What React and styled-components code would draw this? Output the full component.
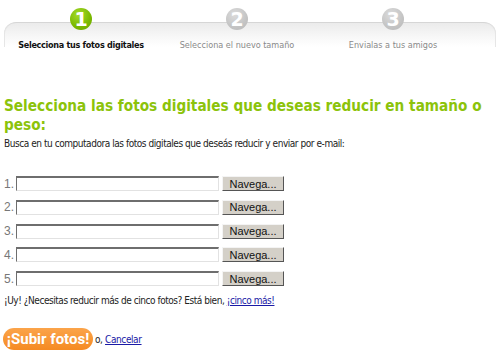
import React from 'react'
import styled, { createGlobalStyle, css } from 'styled-components'

const GlobalStyle = createGlobalStyle`
  body {
    margin: 0;
    background: #fff;
    font-family: "DejaVu Sans Condensed", "DejaVu Sans", Tahoma, sans-serif;
    color: #222;
  }
`

const steps = [
  { n: 1, label: 'Selecciona tus fotos digitales', active: true },
  { n: 2, label: 'Selecciona el nuevo tamaño' },
  { n: 3, label: 'Envialas a tus amigos' },
]

const Page = styled.div`
  width: 499px;
  padding: 0 3px;
  box-sizing: border-box;
`

const Header = styled.div`
  position: relative;
  display: flex;
  padding-top: 8px;
  height: 47px;

  &::before {
    content: '';
    position: absolute;
    top: 22px;
    left: 1px;
    right: 0;
    height: 24px;
    border-radius: 12px 12px 0 0;
    border-top: 1px solid #d6d6d6;
    background: linear-gradient(#ebebeb, #f8f8f8 60%, #fff);
    box-shadow: inset 1px 0 0 #e6e6e6, inset -1px 0 0 #e6e6e6;
  }
`

const Step = styled.div`
  position: relative;
  width: 156px;
  display: flex;
  flex-direction: column;
  align-items: center;
`

const Circle = styled.div`
  width: 22px;
  height: 22px;
  border-radius: 50%;
  display: flex;
  align-items: center;
  justify-content: center;
  color: #fff;
  font-family: "DejaVu Sans", sans-serif;
  font-weight: bold;
  font-size: 19px;
  line-height: 1;
  ${p => p.$active
    ? css`background: radial-gradient(circle at 40% 30%, #a6dc2a, #79b800 60%, #6aa300);`
    : css`background: radial-gradient(circle at 40% 30%, #dcdcdc, #c4c4c4 60%, #b8b8b8);`}
`

const StepLabel = styled.div`
  margin-top: 10px;
  font-size: 9px;
  white-space: nowrap;
  color: ${p => (p.$active ? '#111' : '#8a8a8a')};
  font-weight: ${p => (p.$active ? 'bold' : 'normal')};
  letter-spacing: ${p => (p.$active ? '-0.3px' : '0')};
`

const Heading = styled.h1`
  margin: 42px 0 0 1px;
  font-size: 15.2px;
  line-height: 19px;
  font-weight: bold;
  color: #8cc30a;
`

const Intro = styled.p`
  margin: 3px 0 0 1px;
  font-size: 10px;
  letter-spacing: -0.45px;
  color: #222;
`

const Files = styled.div`
  margin-top: 27px;
  display: flex;
  flex-direction: column;
  gap: 8.75px;
`

const FileRow = styled.div`
  display: flex;
  align-items: center;
  height: 15px;
`

const Num = styled.span`
  width: 12px;
  font-family: "Liberation Sans", Arial, sans-serif;
  font-size: 12px;
  color: #777;
  padding-left: 1px;
`

const FileInput = styled.div`
  width: 203px;
  height: 15px;
  box-sizing: border-box;
  border-top: 2px solid #6e6e6e;
  border-left: 1px solid #6e6e6e;
  border-right: 1px solid #e2e2e2;
  border-bottom: 1px solid #e2e2e2;
  background: #fff;
`

const Browse = styled.button`
  margin-left: 3px;
  width: 62px;
  height: 15px;
  padding: 0;
  box-sizing: border-box;
  font-family: "Liberation Sans", Arial, sans-serif;
  font-size: 11px;
  line-height: 12px;
  color: #111;
  background: #d4d0c8;
  border: 1px solid;
  border-color: #f4f4f4 #555 #555 #f4f4f4;
`

const More = styled.p`
  margin: 9px 0 0 1px;
  font-size: 10px;
  letter-spacing: -0.45px;
  color: #222;

  a {
    color: #1a1aa6;
    text-decoration: underline;
  }
`

const Actions = styled.div`
  margin-top: 22px;
  display: flex;
  align-items: center;
  font-size: 10px;
  letter-spacing: -0.4px;
  color: #222;

  a {
    color: #1a1aa6;
    text-decoration: underline;
  }
`

const Submit = styled.button`
  width: 90px;
  height: 22px;
  padding: 0 0 1px;
  border: none;
  border-radius: 11px;
  background: linear-gradient(#fba44a, #f58a22);
  color: #fff;
  font-family: "Liberation Sans Narrow", Roboto, sans-serif;
  font-weight: bold;
  font-size: 15px;
  letter-spacing: 0;
  white-space: nowrap;
  margin-right: 2px;
`

export default function App() {
  return (
    <Page>
      <GlobalStyle />
      <Header>
        {steps.map(s => (
          <Step key={s.n}>
            <Circle $active={s.active}>{s.n}</Circle>
            <StepLabel $active={s.active}>{s.label}</StepLabel>
          </Step>
        ))}
      </Header>

      <Heading>Selecciona las fotos digitales que deseas reducir en tamaño o peso:</Heading>
      <Intro>Busca en tu computadora las fotos digitales que deseás reducir y enviar por e-mail:</Intro>

      <Files>
        {[1, 2, 3, 4, 5].map(n => (
          <FileRow key={n}>
            <Num>{n}.</Num>
            <FileInput />
            <Browse>Navega...</Browse>
          </FileRow>
        ))}
      </Files>

      <More>
        ¡Uy! ¿Necesitas reducir más de cinco fotos? Está bien, <a href="#">¡cinco más!</a>
      </More>

      <Actions>
        <Submit>¡Subir fotos!</Submit>
        <span>o, <a href="#">Cancelar</a></span>
      </Actions>
    </Page>
  )
}
